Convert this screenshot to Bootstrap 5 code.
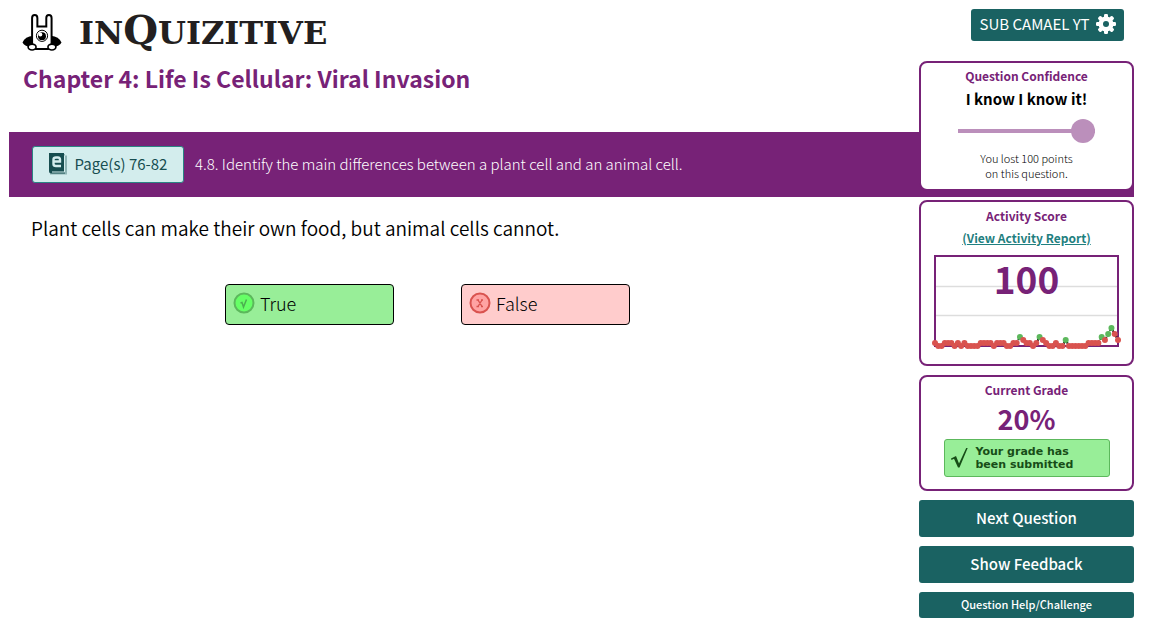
<!DOCTYPE html>
<html lang="en">
<head>
<meta charset="utf-8">
<meta name="viewport" content="width=device-width, initial-scale=1">
<title>InQuizitive</title>
<link href="https://cdn.jsdelivr.net/npm/bootstrap@5.3.0/dist/css/bootstrap.min.css" rel="stylesheet">
<style>
  :root { --plum: #772277; --teal: #1a6262; --leaf: #98ee98; }
  body { font-family: "Noto Sans CJK SC", "Open Sans", sans-serif; font-size: 15px; line-height: 16px; color: #000; background: #fff; }
  .page { display: grid; grid-template-columns: minmax(0, 1fr) 215px; padding: 9px 42px 16px 9px; }
  .quiz { grid-area: 1 / 1 / 2 / 3; }
  .side { grid-area: 1 / 2 / 2 / 3; gap: 9px; }
  .logo { height: 46px; gap: 17px; padding-left: 13px; color: #231f20; }
  .wordmark { font: bold 32px/40px "DejaVu Serif", serif; padding-bottom: 2px; }
  .wordmark .big { font-size: 40px; }
  .chapter { font-size: 23px; line-height: 30px; font-weight: 700; color: var(--plum); padding-left: 14px; margin: 8px 0 39px; }
  .objective { background: var(--plum); height: 65px; padding-left: 23px; gap: 11px; color: #fff; font-weight: 300; }
  .objective span { padding-bottom: 2px; }
  .pages { width: 152px; height: 37px; background: #d3eded; border: 1px solid #2b8484; border-radius: 3px; color: #174e50; gap: 8px; padding: 0 0 2px; }
  .prompt { font-size: 19px; line-height: 26px; font-weight: 350; padding: 18px 237px 0 22px; margin-bottom: 43px; }
  .answers { gap: 67px; padding-left: 216px; }
  .answer { width: 169px; height: 41px; border: 1px solid #000; border-radius: 4px; padding: 0 7px 4px; gap: 5px; font-size: 18px; font-weight: 300; color: #000; text-align: left; }
  .right { background: var(--leaf); }
  .wrong { background: #ffcccc; }
  .btn-teal { background: var(--teal); color: #fff; border: 0; border-radius: 3px; padding: 0 0 2px; height: 37px; font-size: 15px; font-weight: 500; line-height: 20px; }
  .btn-teal:hover { background: #124b4b; color: #fff; }
  .user { height: 32px; width: 153px; margin: 0 10px 11px 0; font-weight: 400; gap: 6px; }
  .help { height: 26px; font-size: 11px; }
  .panel { border: 2px solid var(--plum); border-radius: 8px; background: #fff; text-align: center; padding-top: 5px; }
  .panel h2 { font-size: 12px; line-height: 16px; font-weight: 700; color: var(--plum); margin: 0; }
  .confidence { height: 130px; }
  .activity { height: 166px; padding-top: 6px; }
  .grade { height: 116px; }
  .level { line-height: 20px; font-weight: 700; margin-top: 5px; }
  .slider { appearance: none; display: block; width: 137px; height: 24px; margin: 10px auto 8px; background: transparent; }
  .slider::-webkit-slider-runnable-track { height: 4px; background: #bb8fbb; }
  .slider::-webkit-slider-thumb { appearance: none; width: 24px; height: 24px; margin-top: -10px; border-radius: 50%; background: #bb8fbb; }
  .slider::-moz-range-track { height: 4px; background: #bb8fbb; }
  .slider::-moz-range-thumb { width: 24px; height: 24px; border: 0; border-radius: 50%; background: #bb8fbb; }
  .note { font-size: 11px; line-height: 15px; font-weight: 300; }
  .report { font-size: 12px; line-height: 18px; font-weight: 700; color: #1f8080; margin: 5px 0 6px; }
  .report a { color: inherit; }
  .score { font-size: 37px; line-height: 50px; font-weight: 700; color: var(--plum); }
  .percent { font-size: 27px; line-height: 36px; font-weight: 700; color: var(--plum); margin: 3px 0 2px; }
  .submitted { width: 166px; height: 38px; background: var(--leaf); border: 1px solid #5cb85c; border-radius: 3px; color: #174d17; font: bold 11px/13px "DejaVu Sans", sans-serif; text-align: left; gap: 8px; padding-left: 6px; }
</style>
</head>
<body>
<div class="page">
  <main class="quiz">
    <div class="logo d-flex align-items-center">
      <svg width="40" height="37" viewBox="66 40 118 112" role="img" aria-label="Rabbit">
        <path d="M66 126Q74 108 98 106H152Q176 108 184 126Q178 138 160 139H90Q72 138 66 126z" fill="#000"/>
        <path d="M95 134V52q0-9 8-9t8 9v26h27V52q0-9 8-9t8 9v82q0 12-11 12h-37q-11 0-11-12z" fill="#fff" stroke="#000" stroke-width="6"/>
        <circle cx="125" cy="106" r="17" fill="#fff" stroke="#000" stroke-width="3"/>
        <circle cx="125" cy="107" r="12" fill="#000"/><circle cx="120" cy="102" r="6" fill="#fff"/>
        <g fill="#fff" stroke="#000" stroke-width="5"><ellipse cx="95" cy="140" rx="12" ry="9"/><ellipse cx="155" cy="140" rx="12" ry="9"/></g>
      </svg>
      <div class="wordmark">IN<span class="big">Q</span>UIZITIVE</div>
    </div>
    <h1 class="chapter">Chapter 4: Life Is Cellular: Viral Invasion</h1>
    <div class="objective d-flex align-items-center">
      <button class="pages d-flex align-items-center justify-content-center" type="button">
        <svg width="18" height="22" viewBox="0 0 18 22" aria-hidden="true">
          <path d="M15 1H16V20H3L1 19V21.500H18V2.500H15z" fill="#8fb5b5"/>
          <path d="M0 0H15V18.500H3V19.500H16V20.500H2.500Q0 20.500 0 18z" fill="#174e50"/>
          <path d="M5 8.500h6V6.500Q11 4.500 9 4.500H7Q4.500 4.500 4.500 6.500v4.500Q4.500 13 7 13H12" fill="none" stroke="#d3eded" stroke-width="2.400"/>
        </svg>
        Page(s) 76-82
      </button>
      <span>4.8. Identify the main differences between a plant cell and an animal cell.</span>
    </div>
    <p class="prompt">Plant cells can make their own food, but animal cells cannot.</p>
    <div class="answers d-flex">
      <button class="answer right d-flex align-items-center" type="button">
        <svg width="22" height="22" viewBox="0 0 22 22" aria-hidden="true"><circle cx="11" cy="11" r="9.500" fill="#66ff66" stroke="#5cb85c" stroke-width="2"/><path d="M7.500 11l1.500-.5L10.500 15 13.500 7.500" fill="none" stroke="#4caf50" stroke-width="1.500"/></svg>
        True
      </button>
      <button class="answer wrong d-flex align-items-center" type="button">
        <svg width="22" height="22" viewBox="0 0 22 22" aria-hidden="true"><circle cx="11" cy="11" r="9.500" fill="#ffa3a3" stroke="#d9534f" stroke-width="2"/><path d="M9 8l4 6.500M13 8L9 14.500M7.500 8h2.500M12 8H14M7.500 14.500h2.500M12 14.500H14" fill="none" stroke="#d9534f" stroke-width="1.400"/></svg>
        False
      </button>
    </div>
  </main>

  <aside class="side d-flex flex-column">
    <button class="btn btn-teal user d-flex align-items-center justify-content-center align-self-end" type="button">
      SUB CAMAEL YT
      <svg width="20" height="20" viewBox="-10 -10 20 20" aria-hidden="true">
        <g fill="#fff"><g id="teeth"><rect x="-2" y="-10" width="4" height="20" rx="1.200"/><rect x="-10" y="-2" width="20" height="4" rx="1.200"/></g><use href="#teeth" transform="rotate(45)"/><circle r="7.500"/></g>
        <circle r="3" fill="#1a6262"/>
      </svg>
    </button>
    <section class="panel confidence">
      <h2><label for="conf">Question Confidence</label></h2>
      <div class="level">I know I know it!</div>
      <input class="slider" id="conf" type="range" min="0" max="100" value="100">
      <div class="note">You lost 100 points<br>on this question.</div>
    </section>
    <section class="panel activity">
      <h2>Activity Score</h2>
      <div class="report"><a href="#">(View Activity Report)</a></div>
      <div class="position-relative">
        <svg id="chart" class="d-block mx-auto" width="191" height="96" viewBox="-4 -3 191 96" role="img" aria-label="Activity score history">
          <path d="M0 30.500h183M0 59.500h183" stroke="#ddd" stroke-width="1.500"/>
          <rect x="0" y="0" width="183" height="90" fill="none" stroke="#772277" stroke-width="2"/>
        </svg>
        <div class="score position-absolute top-0 start-0 w-100">100</div>
      </div>
    </section>
    <section class="panel grade">
      <h2>Current Grade</h2>
      <div class="percent">20%</div>
      <div class="submitted d-flex align-items-center mx-auto">
        <svg width="17" height="20" viewBox="0 0 17 20" aria-hidden="true"><path d="M0 10.500L5 8l3 7.500L15.200 0h1.500L8.500 19.500H7L3 10.800.5 12z" fill="#174d17"/></svg>
        <span>Your grade has<br>been submitted</span>
      </div>
    </section>
    <button class="btn btn-teal" type="button">Next Question</button>
    <button class="btn btn-teal" type="button">Show Feedback</button>
    <button class="btn btn-teal help" type="button">Question Help/Challenge</button>
  </aside>
</div>
<script src="https://cdn.jsdelivr.net/npm/bootstrap@5.3.0/dist/js/bootstrap.bundle.min.js"></script>
<script>
  // Score after each answered question; g marks a correct answer.
  const scores = "1 0 0 1 1 1 0 1 0 1 0 0 0 0 1 1 1 1 0 1 1 1 0 0 1 1 3g 2 1 1 0 1 3g 2 1 0 0 1 0 0 2g 0 0 0 0 0 0 1 1 1 1 3g 2 4g 6g 4 2".split(" ");
  const chart = document.getElementById("chart");
  const add = (tag, attrs) => {
    const el = document.createElementNS("http://www.w3.org/2000/svg", tag);
    for (const k in attrs) el.setAttribute(k, attrs[k]);
    chart.appendChild(el);
  };
  const points = scores.map((s, i) => [i * 183 / (scores.length - 1), 90 - parseInt(s) * 3, s.endsWith("g")]);
  add("polyline", { points: points.map(p => p[0] + "," + p[1]).join(" "), fill: "none", stroke: "#000", "stroke-width": 2, "stroke-dasharray": "2 1" });
  points.forEach(p => add("circle", { cx: p[0], cy: p[1], r: 3, fill: p[2] ? "#5cb85c" : "#d9534f" }));
</script>
</body>
</html>
